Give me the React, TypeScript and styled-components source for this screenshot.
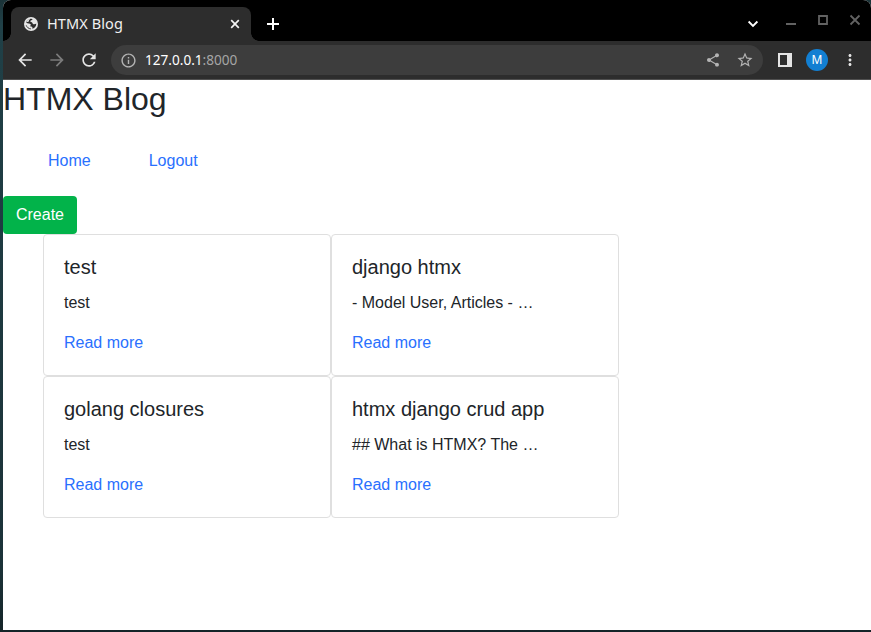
import React from "react";
import styled, { createGlobalStyle } from "styled-components";
import {
  MdArrowBack,
  MdArrowForward,
  MdRefresh,
  MdInfoOutline,
  MdShare,
  MdStarBorder,
  MdMoreVert,
} from "react-icons/md";

const GlobalStyle = createGlobalStyle`
  * { box-sizing: border-box; }
  html, body, #root { height: 100%; }
  body { margin: 0; overflow: hidden; background: #1b3238; }
  h1, h2, p { margin: 0; padding: 0; font-weight: 400; }
  svg { display: block; flex: none; }
`;

const Desktop = styled.div`
  height: 632px;
  padding: 0 0 2px 3px;
  background: linear-gradient(#1b3338, #204047 25px, #1b3238 90%, #142428);
`;

const BrowserWindow = styled.div`
  display: flex;
  flex-direction: column;
  height: 630px;
  overflow: hidden;
  border-radius: 8px 8px 0 0;
  background: #fff;
`;

const TabStrip = styled.div`
  display: flex;
  height: 41px;
  padding: 7px 8px 0;
  background: #000;
  color: #fff;
`;

const Tab = styled.div`
  position: relative;
  display: flex;
  align-items: center;
  width: 240px;
  height: 34px;
  padding: 0 11px 0 13px;
  border-radius: 8px 8px 0 0;
  background: #2d2d2d;
  &::before,
  &::after {
    content: "";
    position: absolute;
    bottom: 0;
    width: 8px;
    height: 8px;
  }
  &::before {
    left: -8px;
    background: radial-gradient(circle at 0 0, #000 7.5px, #2d2d2d 8px);
  }
  &::after {
    right: -8px;
    background: radial-gradient(circle at 100% 0, #000 7.5px, #2d2d2d 8px);
  }
`;

const TabTitle = styled.span`
  flex: 1;
  margin-left: 9px;
  padding-bottom: 2px;
  color: #f1f1f1;
  font: 14.5px/32px "Noto Sans", sans-serif;
  letter-spacing: 0.1px;
  white-space: nowrap;
`;

const NewTab = styled.div`
  display: flex;
  align-items: center;
  margin-left: 15px;
`;

const WindowControls = styled.div`
  display: flex;
  align-items: flex-start;
  margin-left: auto;
  color: #626262;
`;

const Toolbar = styled.div`
  display: flex;
  align-items: center;
  height: 39px;
  padding: 0 12px;
  border-bottom: 1px solid #505050;
  background: #2d2d2d;
  color: #e4e4e4;
`;

const NavButtons = styled.div`
  display: flex;
  gap: 12px;
  width: 96px;
`;

const AddressBar = styled.div`
  display: flex;
  align-items: center;
  flex: 1;
  height: 30px;
  padding: 0 9px;
  border-radius: 15px;
  background: #3d3d3d;
  color: #b4b4b4;
`;

const Url = styled.span`
  flex: 1;
  margin-left: 8px;
  color: #a5a5a5;
  font: 13.6px/30px "Noto Sans", sans-serif;
`;

const Host = styled.span`
  color: #fff;
`;

const AddressActions = styled.div`
  display: flex;
  align-items: center;
  gap: 15px;
`;

const ToolbarActions = styled.div`
  display: flex;
  align-items: center;
  width: 96px;
  padding-left: 15px;
`;

const Avatar = styled.div`
  width: 22px;
  height: 22px;
  margin: 0 13px 0 14px;
  border-radius: 50%;
  background: #127fd2;
  color: #fff;
  font: 400 12px/22px "Noto Sans", sans-serif;
  text-align: center;
`;

const Page = styled.main`
  flex: 1;
  color: #212529;
  font: 16px/24px "Liberation Sans", Arial, sans-serif;
`;

const PageTitle = styled.h1`
  height: 46px;
  font-size: 32px;
  line-height: 38.4px;
`;

const Link = styled.a`
  color: #2970fe;
  text-decoration: none;
`;

const Menu = styled.nav`
  display: flex;
  gap: 58px;
  height: 70px;
  padding: 23px 0 0 45px;
`;

const CreateButton = styled.button`
  display: block;
  width: 74px;
  height: 38px;
  padding: 0;
  border: 0;
  border-radius: 4px;
  background: #02b34a;
  color: #fff;
  font: inherit;
`;

const Articles = styled.section`
  display: grid;
  grid-template-columns: repeat(2, 288px);
  grid-auto-rows: 142px;
  margin-left: 40px;
`;

const Card = styled.article`
  padding: 20px;
  border: 1px solid #dfdfdf;
  border-radius: 4px;
  background: #fff;
`;

const CardTitle = styled.h2`
  margin-bottom: 12px;
  font-size: 20px;
  line-height: 24px;
`;

const CardText = styled.p`
  margin-bottom: 16px;
`;

const articles = [
  { title: "test", text: "test" },
  { title: "django htmx", text: "- Model User, Articles - …" },
  { title: "golang closures", text: "test" },
  { title: "htmx django crud app", text: "## What is HTMX? The …" },
];

const GlobeIcon = () => (
  <svg width="14" height="14" viewBox="0 0 14 14" fill="none">
    <circle cx="7" cy="7" r="7" fill="#e6e6e6" />
    <path
      d="M8.6 1.9C8.4 3.3 6.6 2.9 6.3 4.2c-.2 1.1 1.6.7 2 1.5.5 1 .8 1.5 1.9 1.5.8 0 1.1-.5 2.1-.4-.1 2.4-1.6 4.3-3.8 5-.3-.7.2-1.2-.3-1.8-.5-.5-1.6-.2-1.8-1 -.1-.7.6-1 .3-1.7C6.2 6.4 3.6 7 2.1 5.3 2.8 3.2 4.7 1.8 7 1.8Z"
      fill="#2d2d2d"
    />
    <path d="M1.9 7c1.6.1 3.2.2 3.8 1 .6.9-.4 1.6.2 2.2.5.5 1.4.3 1.6 1.8-3 .3-5.6-2-5.6-5Z" fill="#e6e6e6" />
    <path d="M2.2 8.3c.7 1.9 2.3 3.4 4.7 3.6" stroke="#2d2d2d" strokeWidth=".9" />
    <path d="M2.3 4.8C3 3.2 4.4 2 6.3 1.8 5.4 2.7 4.6 3.4 4.9 4.5c-.8.5-1.7.6-2.6.3Z" fill="#e6e6e6" />
  </svg>
);

export default function App() {
  return (
    <>
      <GlobalStyle />
      <Desktop>
        <BrowserWindow>
          <TabStrip>
            <Tab>
              <GlobeIcon />
              <TabTitle>HTMX Blog</TabTitle>
              <svg width="10" height="10" viewBox="0 0 10 10" stroke="#f4f4f4" strokeWidth="1.7">
                <path d="M1.2 1.2l7.6 7.6M8.8 1.2L1.2 8.8" />
              </svg>
            </Tab>
            <NewTab>
              <svg width="14" height="14" viewBox="0 0 14 14" stroke="#fff" strokeWidth="2">
                <path d="M1 7h12M7 1v12" />
              </svg>
            </NewTab>
            <WindowControls>
              <svg width="123" height="24" viewBox="740 7 123 24" fill="none" stroke="currentColor">
                <path d="M748.6 21.5l4.4 4.4 4.4-4.4" stroke="#fff" strokeWidth="1.8" />
                <path d="M786 24h10" strokeWidth="2" />
                <path d="M819 16h8v8h-8z" strokeWidth="1.8" />
                <path d="M850.5 15.5l9 9m0-9l-9 9" strokeWidth="1.8" />
              </svg>
            </WindowControls>
          </TabStrip>
          <Toolbar>
            <NavButtons>
              <MdArrowBack size={20} />
              <MdArrowForward size={20} color="#7b7b7b" />
              <MdRefresh size={20} />
            </NavButtons>
            <AddressBar>
              <MdInfoOutline size={17} />
              <Url>
                <Host>127.0.0.1</Host>:8000
              </Url>
              <AddressActions>
                <MdShare size={16} />
                <MdStarBorder size={18} />
              </AddressActions>
            </AddressBar>
            <ToolbarActions>
              <svg width="14" height="14" viewBox="0 0 14 14">
                <path fillRule="evenodd" d="M0 0h14v14H0zM2 2v10h7V2z" fill="#e4e4e4" />
              </svg>
              <Avatar>M</Avatar>
              <MdMoreVert size={18} />
            </ToolbarActions>
          </Toolbar>
          <Page>
            <PageTitle>HTMX Blog</PageTitle>
            <Menu>
              <Link>Home</Link>
              <Link>Logout</Link>
            </Menu>
            <CreateButton>Create</CreateButton>
            <Articles>
              {articles.map((article) => (
                <Card key={article.title}>
                  <CardTitle>{article.title}</CardTitle>
                  <CardText>{article.text}</CardText>
                  <Link>Read more</Link>
                </Card>
              ))}
            </Articles>
          </Page>
        </BrowserWindow>
      </Desktop>
    </>
  );
}
